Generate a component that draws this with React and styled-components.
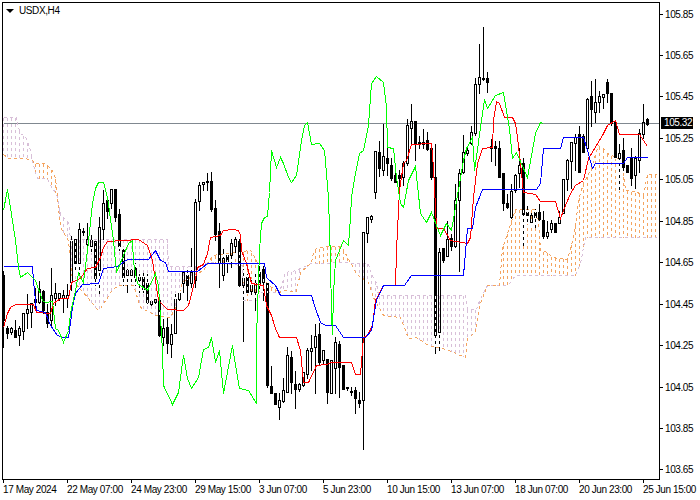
import React from 'react';
import styled, { createGlobalStyle } from 'styled-components';

const GlobalStyle = createGlobalStyle`
  html, body {
    margin: 0;
    background: #fff;
  }
`;

const Page = styled.div`
  width: 700px;
  height: 500px;
  padding: 2px 0 0 2px;
  box-sizing: border-box;
  background: #fff;
  color: #000;
  font-family: "Liberation Sans", Arial, sans-serif;
  font-size: 10px;
  letter-spacing: -0.4px;
  overflow: hidden;
`;

const ChartRow = styled.div`
  display: flex;
  height: 478px;
`;

const Plot = styled.div`
  position: relative;
  width: 658px;
  height: 478px;
  box-sizing: border-box;
  border: 1px solid #000;
`;

const ChartSvg = styled.svg`
  display: block;
  width: 656px;
  height: 476px;
`;

const Title = styled.div`
  position: absolute;
  left: 3px;
  top: 2px;
  display: flex;
  align-items: center;
  gap: 5px;
  line-height: 12px;
  letter-spacing: -0.4px;
`;

const TitleArrow = styled.span`
  width: 0;
  height: 0;
  border-left: 4px solid transparent;
  border-right: 4px solid transparent;
  border-top: 4px solid #000;
`;

const PriceAxis = styled.div`
  position: relative;
  flex: 1;
  display: flex;
  flex-direction: column;
  justify-content: space-between;
  padding: 6px 0 4px;
`;

const PriceRow = styled.div`
  display: flex;
  align-items: center;
  height: 12px;
  gap: 2px;
`;

const PriceTick = styled.span`
  width: 3px;
  height: 1px;
  background: #000;
`;

const PriceTag = styled.div`
  position: absolute;
  left: 1px;
  top: 115px;
  width: 32px;
  height: 12px;
  padding-left: 3px;
  box-sizing: border-box;
  background: #000;
  color: #fff;
  line-height: 12px;
`;

const TimeAxis = styled.div`
  display: flex;
  padding-left: 1px;
`;

const TimeCell = styled.div`
  flex: 0 0 64px;
  display: flex;
  flex-direction: column;
`;

const TimeTick = styled.span`
  width: 1px;
  height: 3px;
  background: #000;
`;

const TimeLabel = styled.span`
  line-height: 12px;
  margin-top: 1px;
  white-space: nowrap;
`;

const Line = styled.polyline`
  fill: none;
  stroke: ${(p) => p.$color};
  stroke-width: 1;
  stroke-dasharray: ${(p) => (p.$dashed ? '3 3' : 'none')};
`;

const Stroke = styled.line`
  stroke: ${(p) => p.$color};
  stroke-width: 1;
  stroke-dasharray: ${(p) => (p.$dashed ? '3 3' : 'none')};
`;

const Body = styled.rect`
  fill: ${(p) => (p.$bear ? '#000' : 'none')};
  stroke: #000;
  stroke-width: 1;
`;

const prices = ['105.85', '105.65', '105.45', '105.25', '105.05', '104.85', '104.65', '104.45', '104.25', '104.05', '103.85', '103.65'];
const times = ['17 May 2024', '22 May 07:00', '24 May 23:00', '29 May 15:00', '3 Jun 07:00', '5 Jun 23:00', '10 Jun 15:00', '13 Jun 07:00', '18 Jun 07:00', '20 Jun 23:00', '25 Jun 15:00'];

// pixel coordinates read off the picture: x, high, body top, body bottom, low, kind
const candles = [
  [3,270,275,320,347,'b'],[7,325,328,333,338,'b'],[11,326,328,332,334,'u'],[15,319,330,337,337,'b'],
  [19,325,328,335,345,'u'],[23,313,313,331,339,'u'],[27,293,309,313,328,'u'],[31,302,303,312,327,'u'],
  [35,287,299,302,307,'u'],[39,280,289,302,303,'u'],[43,289,291,310,313,'b'],[47,303,312,323,327,'b'],
  [51,267,295,320,325,'u'],[55,282,293,298,305,'u'],[59,293,293,298,300,'u'],[63,289,295,298,312,'u'],
  [67,283,295,298,307,'u'],[71,235,241,282,290,'u'],[75,239,239,263,272,'b'],[79,222,229,263,273,'u'],
  [83,227,231,232,235,'b'],[87,222,239,244,248,'u'],[91,234,240,246,252,'u'],[95,241,241,278,285,'b'],
  [99,216,227,270,293,'u'],[103,189,203,229,240,'u'],[107,198,200,211,218,'b'],[111,188,189,203,208,'u'],
  [115,188,189,217,221,'b'],[119,208,214,246,250,'b'],[123,246,250,277,285,'b'],[127,268,270,275,292,'u'],
  [131,268,270,275,283,'u'],[135,262,268,277,285,'b'],[139,273,277,280,292,'u'],[143,272,277,289,292,'b'],
  [147,273,283,302,303,'b'],[151,300,301,304,305,'u'],[155,298,299,302,303,'u'],[159,298,300,335,336,'b'],
  [163,318,328,337,345,'u'],[167,317,327,343,353,'b'],[171,323,334,344,357,'u'],[175,292,299,333,333,'u'],
  [179,290,293,299,300,'u'],[183,270,272,283,292,'u'],[187,267,275,285,300,'b'],[191,247,272,283,287,'u'],
  [195,198,202,280,287,'u'],[199,181,185,201,210,'u'],[203,181,182,184,190,'u'],[207,172,181,182,190,'b'],
  [211,171,181,209,211,'b'],[215,199,208,234,240,'b'],[219,222,231,263,287,'b'],[223,248,258,275,280,'u'],
  [227,253,255,261,272,'b'],[231,238,243,255,267,'u'],[235,236,239,246,255,'u'],[239,238,241,285,286,'b'],
  [243,268,278,285,341,'u'],[247,273,277,292,293,'b'],[251,278,285,291,297,'u'],[255,270,283,292,310,'u'],
  [259,265,272,285,290,'b'],[263,265,269,282,300,'b'],[267,283,283,385,387,'b'],[271,365,386,393,393,'b'],
  [275,393,393,404,404,'b'],[279,392,400,407,419,'u'],[283,377,390,401,402,'u'],[287,346,355,392,392,'u'],
  [291,350,357,382,393,'b'],[295,370,384,389,408,'b'],[299,382,384,389,391,'u'],[303,371,372,385,386,'u'],
  [307,347,350,374,378,'u'],[311,334,348,351,370,'u'],[315,323,336,347,393,'u'],[319,322,334,362,365,'b'],
  [323,350,350,360,363,'u'],[327,359,359,392,403,'b'],[331,359,360,393,393,'u'],[335,336,342,368,393,'u'],
  [339,340,344,367,397,'b'],[343,365,365,389,389,'b'],[347,386,387,388,390,'b'],[351,386,391,392,395,'b'],
  [355,386,390,398,413,'b'],[359,391,400,403,407,'b'],[363,232,232,400,449,'u'],[367,217,217,233,242,'u'],
  [371,214,216,219,222,'u'],[375,150,151,192,198,'u'],[379,140,152,168,176,'b'],[383,123,156,170,175,'u'],
  [387,147,158,163,175,'b'],[391,157,165,178,180,'b'],[395,165,175,182,182,'b'],[399,169,175,178,187,'b'],
  [403,160,163,177,185,'u'],[407,118,125,163,165,'u'],[411,103,121,128,143,'u'],[415,121,121,143,160,'b'],
  [419,135,142,144,148,'b'],[423,128,142,144,148,'b'],[427,131,140,149,150,'b'],[431,148,148,177,179,'b'],
  [435,143,177,335,353,'b'],[439,247,252,332,350,'u'],[443,247,248,260,262,'b'],[447,220,239,256,256,'u'],
  [451,233,238,246,250,'b'],[455,183,200,246,247,'u'],[459,168,173,200,271,'u'],[463,134,152,172,173,'u'],
  [467,147,150,153,155,'u'],[471,125,132,143,144,'u'],[475,77,84,133,135,'u'],[479,43,77,84,93,'u'],
  [483,26,78,79,80,'b'],[487,71,78,82,92,'b'],[491,138,146,148,161,'b'],[495,140,146,148,165,'b'],
  [499,140,148,177,177,'b'],[503,173,173,203,210,'b'],[507,193,203,207,208,'b'],[511,183,191,217,218,'u'],
  [515,173,175,190,192,'u'],[519,147,165,173,187,'u'],[523,157,163,214,245,'b'],[527,205,212,215,223,'b'],
  [531,212,215,222,224,'u'],[535,208,212,217,227,'b'],[539,203,212,219,220,'b'],[543,210,220,236,238,'b'],
  [547,220,232,236,238,'u'],[551,219,223,229,232,'u'],[555,223,223,232,232,'b'],[559,210,217,223,223,'u'],
  [563,179,179,213,213,'u'],[567,158,160,179,190,'u'],[571,141,142,161,188,'u'],[575,133,137,143,170,'u'],
  [579,125,134,172,172,'b'],[583,133,136,152,152,'b'],[587,97,99,148,150,'u'],[591,80,96,109,126,'b'],
  [595,78,102,112,122,'u'],[599,90,96,102,112,'u'],[603,93,94,97,108,'u'],[607,78,82,93,102,'b'],
  [611,93,93,123,125,'b'],[615,119,122,157,158,'b'],[619,143,153,158,190,'u'],[623,137,150,167,172,'b'],
  [627,165,165,172,172,'b'],[631,147,157,178,185,'b'],[635,155,158,175,188,'u'],[639,128,133,160,172,'u'],
  [643,103,122,134,138,'u'],[647,117,119,124,125,'b'],
];

const tenkan = [[3,327],[7,313],[10,307],[15,304],[33,304],[36,312],[50,313],[53,303],[60,298],[68,298],[71,282],[80,278],[87,268],[95,267],[100,257],[103,247],[107,241],[138,239],[147,245],[152,260],[158,300],[167,309],[183,310],[188,305],[195,278],[197,267],[203,264],[207,253],[210,237],[220,235],[223,230],[232,229],[238,230],[240,235],[241,250],[246,263],[251,283],[263,285],[266,305],[271,315],[275,328],[279,337],[296,337],[300,350],[303,382],[308,382],[316,365],[326,364],[331,362],[351,362],[355,374],[360,374],[363,337],[367,335],[372,325],[375,300],[383,285],[395,285],[396,250],[399,190],[403,163],[406,160],[411,144],[431,143],[433,167],[435,207],[436,228],[443,228],[450,240],[467,243],[470,237],[473,197],[477,163],[482,148],[492,147],[493,120],[496,101],[499,103],[504,117],[512,117],[515,123],[517,137],[520,163],[523,192],[535,194],[540,201],[555,201],[560,218],[563,210],[570,193],[575,185],[583,180],[588,158],[602,135],[607,125],[615,120],[619,134],[639,134],[647,146]];

const kijun = [[3,266],[32,266],[33,280],[36,310],[45,312],[50,325],[57,335],[62,337],[68,337],[72,307],[75,293],[82,284],[98,283],[103,268],[117,266],[127,259],[148,259],[155,250],[160,260],[165,262],[168,271],[197,271],[207,263],[264,263],[266,277],[275,285],[280,295],[311,295],[315,308],[320,322],[325,325],[335,325],[343,337],[365,337],[371,330],[376,300],[383,285],[404,285],[411,275],[463,275],[467,228],[472,228],[475,207],[482,189],[536,189],[540,183],[543,148],[560,148],[563,137],[583,137],[587,150],[592,168],[595,163],[623,163],[627,157],[647,157]];

const chikou = [[3,210],[7,189],[10,207],[15,240],[18,267],[20,277],[27,272],[35,280],[42,300],[45,302],[52,301],[55,328],[58,330],[63,342],[68,330],[70,313],[75,290],[78,273],[83,282],[87,250],[92,203],[95,188],[98,182],[103,182],[107,197],[113,240],[116,272],[128,243],[132,240],[133,262],[137,283],[147,290],[155,273],[158,285],[162,350],[163,385],[172,404],[178,392],[183,355],[187,378],[191,388],[198,377],[203,349],[208,347],[211,337],[215,362],[219,350],[223,393],[232,345],[233,352],[239,388],[248,390],[256,403],[256,338],[259,250],[261,223],[264,217],[267,216],[269,192],[271,150],[276,167],[280,157],[283,163],[288,177],[291,182],[296,175],[301,140],[304,125],[307,122],[311,144],[319,143],[324,150],[328,197],[330,260],[331,315],[332,334],[333,293],[335,260],[343,240],[348,245],[350,217],[351,197],[355,173],[359,153],[363,150],[368,125],[371,83],[376,76],[383,82],[386,107],[387,147],[393,148],[396,177],[400,203],[403,207],[408,180],[415,166],[420,213],[426,222],[431,212],[440,235],[446,223],[451,230],[463,160],[466,148],[472,137],[474,170],[484,99],[487,108],[495,95],[503,92],[509,128],[512,158],[516,152],[527,177],[535,133],[540,122],[543,123]];

const spanB = [[3,117],[16,117],[18,127],[20,133],[25,136],[30,150],[32,160],[33,165],[37,178],[47,178],[50,185],[55,192],[57,197],[60,215],[63,217],[68,222],[70,239],[167,239],[168,266],[193,266],[204,264],[207,262],[220,263],[242,265],[243,300],[258,300],[260,292],[273,292],[279,293],[281,285],[285,272],[296,270],[300,268],[311,263],[348,262],[351,263],[368,263],[370,272],[376,283],[378,295],[465,295],[467,309],[476,309],[479,300],[487,285],[505,285],[510,282],[515,275],[575,275],[580,263],[585,237],[656,237]];

const spanA = [[3,154],[8,158],[25,158],[32,160],[34,163],[45,163],[52,170],[55,178],[57,197],[60,227],[68,240],[72,280],[83,292],[97,309],[100,308],[113,288],[120,285],[133,285],[140,307],[155,315],[170,317],[175,307],[182,282],[193,275],[203,270],[212,255],[233,252],[250,250],[256,260],[260,273],[268,285],[276,290],[279,293],[281,290],[296,291],[300,272],[311,262],[313,252],[316,248],[328,246],[341,246],[345,253],[350,262],[356,273],[358,275],[368,282],[373,297],[383,315],[400,317],[408,338],[416,337],[428,345],[446,349],[460,355],[465,357],[467,338],[475,332],[479,305],[487,285],[499,285],[502,248],[509,227],[515,209],[535,209],[538,220],[540,250],[547,252],[552,257],[567,259],[569,252],[574,233],[578,200],[583,183],[590,170],[598,145],[605,150],[607,153],[622,160],[625,190],[637,192],[643,195],[647,174],[656,174]];

const SANDY = '#f4a460';
const THISTLE = '#d8bfd8';

const toPoints = (pts) => pts.map((p) => p.join(',')).join(' ');

const yAt = (pts, x) => {
  for (let i = 1; i < pts.length; i++) {
    if (x <= pts[i][0]) {
      const [x0, y0] = pts[i - 1];
      const [x1, y1] = pts[i];
      return x1 === x0 ? y1 : Math.round(y0 + ((y1 - y0) * (x - x0)) / (x1 - x0));
    }
  }
  return pts[pts.length - 1][1];
};

const columns = [];
for (let x = 3; x <= 655; x += 4) {
  const a = yAt(spanA, x);
  const b = yAt(spanB, x);
  columns.push({ x, top: Math.min(a, b), bottom: Math.max(a, b), color: a < b ? SANDY : THISTLE });
}

// the hatch shows through the candles as light dashes
const Gaps = ({ x, from, to, top }) =>
  to > from ? (
    <Stroke
      x1={x}
      x2={x}
      y1={from}
      y2={to}
      $color="#fff"
      $dashed
      strokeDashoffset={(from - top) % 6}
    />
  ) : null;

const Candle = ({ c }) => {
  const [x, high, bodyTop, bodyBottom, low, kind] = c;
  const bear = kind === 'b';
  const col = columns.find((k) => k.x === x);
  const from = Math.max(col.top, high);
  const to = Math.min(col.bottom, low);
  return (
    <g>
      <Stroke x1={x} x2={x} y1={high} y2={bodyTop} $color="#000" />
      <Stroke x1={x} x2={x} y1={bodyBottom} y2={low} $color="#000" />
      <Body x={x - 1} y={bodyTop} width={2} height={Math.max(bodyBottom - bodyTop, 1)} $bear={bear} />
      {bear ? (
        <Gaps x={x} from={from} to={to} top={col.top} />
      ) : (
        <>
          <Gaps x={x} from={from} to={Math.min(to, bodyTop)} top={col.top} />
          <Gaps x={x} from={Math.max(from, bodyBottom)} to={to} top={col.top} />
        </>
      )}
    </g>
  );
};

const Chart = () => (
  <ChartSvg viewBox="3 3 656 476" shapeRendering="crispEdges">
    <g transform="translate(0.5 0.5)">
      <Stroke x1={3} x2={659} y1={123} y2={123} $color="#808890" />
      {columns.map((k) => (
        <Stroke key={k.x} x1={k.x} x2={k.x} y1={k.top} y2={k.bottom} $color={k.color} $dashed />
      ))}
      <Line points={toPoints(spanB)} $color={THISTLE} $dashed />
      <Line points={toPoints(spanA)} $color={SANDY} $dashed />
      {candles.map((c) => (
        <Candle key={c[0]} c={c} />
      ))}
      <Line points={toPoints(tenkan)} $color="#ff0000" />
      <Line points={toPoints(kijun)} $color="#0000ff" />
      <Line points={toPoints(chikou)} $color="#00ff00" />
    </g>
  </ChartSvg>
);

const App = () => (
  <Page>
    <GlobalStyle />
    <ChartRow>
      <Plot>
        <Chart />
        <Title>
          <TitleArrow />
          USDX,H4
        </Title>
      </Plot>
      <PriceAxis>
        {prices.map((p) => (
          <PriceRow key={p}>
            <PriceTick />
            {p}
          </PriceRow>
        ))}
        <PriceTag>105.32</PriceTag>
      </PriceAxis>
    </ChartRow>
    <TimeAxis>
      {times.map((t) => (
        <TimeCell key={t}>
          <TimeTick />
          <TimeLabel>{t}</TimeLabel>
        </TimeCell>
      ))}
    </TimeAxis>
  </Page>
);

export default App;
